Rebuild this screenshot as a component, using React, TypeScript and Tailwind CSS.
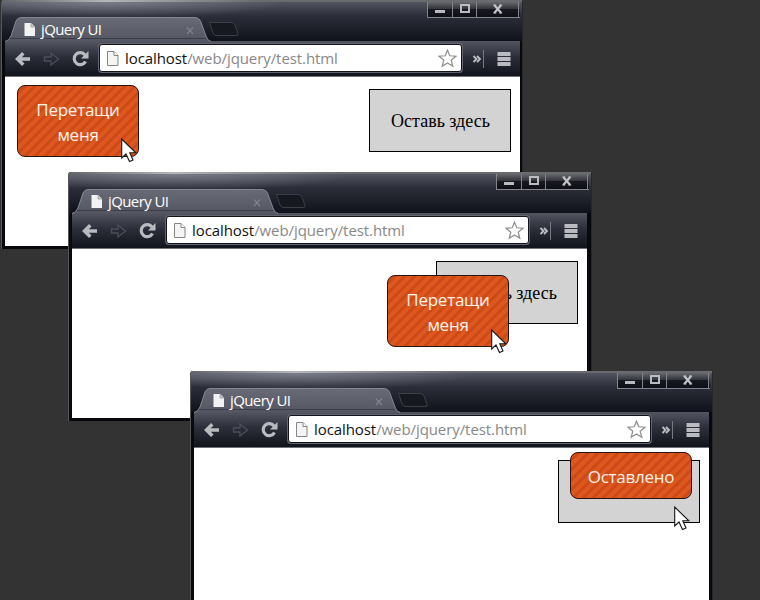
import React from "react";

const sans = "font-['Open_Sans','Noto_Sans',sans-serif]";

function Controls() {
  return (
    <div className="flex h-[18px] w-[93px] border-b border-l border-[#85868b] bg-linear-to-b from-[#77797e] via-[#34363d] via-50% to-[#090a10]">
      <svg width="93" height="18" viewBox="0 0 93 18" shapeRendering="crispEdges">
        <path d="M0 9H92V17H0Z" fill="#10121a" opacity=".75" />
        <path d="M24.500 0V17M49.500 0V17M91.500 0V17" stroke="#85868b" />
        <path d="M7 10H17V13H7Z" fill="#b9bbc0" />
        <path d="M33 5H41V12H33Z" fill="none" stroke="#b9bbc0" strokeWidth="2" />
        <path d="M67 5L74 13M74 5L67 13" stroke="#c3c4c8" strokeWidth="2.200" shapeRendering="auto" />
        <path d="M66 5H69M72 5H75M66 13H69M72 13H75" stroke="#c3c4c8" shapeRendering="auto" />
      </svg>
    </div>
  );
}

function TitleBar() {
  return (
    <div className="relative flex h-[41px] justify-end bg-linear-to-b from-[#575a65] via-[#2b2e38] via-40% to-[#10121b] pr-[2px]">
      <div className="absolute inset-x-0 top-0 h-[2px] bg-linear-to-r from-[#65666a] via-[#b5b6b9] via-20% to-[#6a6b6f] to-50%" />
      <div className="absolute left-0 top-[2px] h-[18px] w-[300px] bg-[radial-gradient(ellipse_at_35%_0%,rgba(165,168,178,0.5),transparent_65%)]" />
      <svg className="absolute left-0 top-[15px]" width="245" height="27" viewBox="0 0 245 27">
        <defs>
          <linearGradient id="tabFill" x1="0" y1="0" x2="0" y2="1">
            <stop offset="0" stopColor="#686b75" />
            <stop offset="1" stopColor="#535660" />
          </linearGradient>
        </defs>
        <path d="M3 27Q7 26 9 21L14 6Q15.500 2.500 19 2.500H193Q197 2.500 198.500 6L204 21Q205.500 26 209 27Z" fill="url(#tabFill)" />
        <path d="M3 26.500Q7 26 9 21L14 6Q15.500 2.500 19 2.500H193Q197 2.500 198.500 6L204 21Q205.500 26 209 26.500" fill="none" stroke="#858893" />
        <path d="M8 23.500H204" stroke="#3b3e48" />
        <path d="M207.500 7.500H229Q232 7.500 233 10L236 18Q237 20.500 234 20.500H215Q212 20.500 211 18Z" fill="#171921" stroke="#3d3f47" />
        <path d="M22.500 8H29L33 12V21H22.500Z" fill="#f2f2f2" />
        <path d="M29 8V12H33" fill="#c6c7ca" stroke="#888a91" strokeWidth=".6" />
        <path d="M185 12.500L191 19M191 12.500L185 19" stroke="#7f828b" strokeWidth="1.300" />
      </svg>
      <span className={`${sans} absolute left-[39px] top-[19px] whitespace-nowrap text-[15px] leading-[21px] tracking-[-0.6px] text-white`}>jQuery UI</span>
      <Controls />
    </div>
  );
}

function Toolbar() {
  return (
    <div className="flex h-[36px] shrink-0 items-start border-b border-[#70727a] bg-linear-to-b from-[#535660] via-[#2c2f39] via-45% to-[#12141c] pl-[10px] pt-[5px]">
      <svg className="-translate-x-px" width="84" height="27" viewBox="0 0 84 27">
        <g fill="none">
          <path d="M4 13H17M10.300 7.200L4.500 13L10.300 18.800" transform="translate(-1 0)" stroke="#b9bbc0" strokeWidth="3.500" />
          <path d="M30.500 11H37V7L44.500 13L37 19V15H30.500Z" stroke="#4c4f59" strokeWidth="1.300" />
          <path d="M71 9A6 6 0 1 0 71.500 15.500" stroke="#b9bbc0" strokeWidth="3.200" />
          <path d="M74.500 5V12.500H67Z" fill="#b9bbc0" />
        </g>
      </svg>
      <div className="-mt-[2px] flex h-[28px] w-[363px] shrink-0 items-center rounded-[3px] border border-[#11131a] bg-white shadow-[0_0_0_1px_#62656f]">
        <svg className="ml-[6px] shrink-0" width="13" height="17" viewBox="0 0 13 17">
          <path d="M1.500 1.500H8L12 5.500V15.500H1.500Z" fill="#f4f4f4" stroke="#858585" />
          <path d="M8 1.500V5.500H12" fill="white" stroke="#858585" />
        </svg>
        <span className={`${sans} ml-[6px] w-[313px] shrink-0 whitespace-nowrap text-[15px] leading-[22px] tracking-[-0.08px] text-[#888]`}>
          <span className="text-[#111]">localhost</span>/web/jquery/test.html
        </span>
        <svg className="shrink-0" width="19" height="19" viewBox="0 0 19 19">
          <path d="M9.500 1.200L11.800 6.800L18 7.200L13.200 11.200L14.800 17.300L9.500 14L4.200 17.300L5.800 11.200L1 7.200L7.200 6.800Z" fill="white" stroke="#8c8c8c" strokeWidth="1.200" />
        </svg>
      </div>
      <svg className="shrink-0" width="54" height="27" viewBox="0 0 54 27">
        <path d="M11.500 10L14.500 13L11.500 16M15 10L18 13L15 16" fill="none" stroke="#c0c1c5" strokeWidth="1.800" />
        <path d="M21.500 4V22" stroke="#777a83" />
        <path d="M35.500 8H48.500M35.500 13H48.500M35.500 18H48.500" stroke="#b9bbc0" strokeWidth="4" />
      </svg>
    </div>
  );
}

function Browser({ place, children }: { place: string; children: React.ReactNode }) {
  return (
    <div className={`absolute flex flex-col rounded-t-[3px] border-l border-r border-l-[#55575b] border-r-[#25272b] bg-[#08090d] ${place}`}>
      <TitleBar />
      <div className="flex min-h-0 flex-1 flex-col pb-[3px] pl-[3px]">
        <div className="flex min-h-0 w-[515px] flex-1 flex-col">
          <Toolbar />
          <div className="relative min-h-0 flex-1 bg-white">{children}</div>
        </div>
      </div>
    </div>
  );
}

function DropZone({ label }: { label?: string }) {
  return (
    <div className="absolute left-[364px] top-[12px] flex h-[63px] w-[142px] items-center justify-center border border-black bg-[#d3d3d3] pl-px font-['Liberation_Serif',serif] text-[18px] leading-none text-black">
      {label}
    </div>
  );
}

function DragCard({ place, children }: { place: string; children: React.ReactNode }) {
  return (
    <div className={`absolute flex w-[122px] items-center justify-center rounded-[8px] border border-[#29150d] bg-[#dd5117] bg-[repeating-linear-gradient(135deg,#de571f_0px,#de571f_3px,#cb4a18_4px,#cb4a18_6px,#de571f_7.07px)] pt-px text-center text-[17px] leading-[25px] tracking-[-0.25px] text-[#fff3e7] ${sans} ${place}`}>
      {children}
    </div>
  );
}

function Cursor({ place }: { place: string }) {
  return (
    <svg className={`absolute ${place}`} width="17" height="25" viewBox="0 0 17 25">
      <path d="M.7 1V20L5 16L8.500 23.500L12 22L8.800 14.800H14.800Z" fill="white" stroke="#171717" strokeWidth="1.100" />
    </svg>
  );
}

export default function App() {
  return (
    <main className="relative h-[600px] w-[760px] overflow-hidden bg-[#333]">
      <Browser place="left-px top-0 h-[249px] w-[522px]">
        <DropZone label="Оставь здесь" />
        <DragCard place="left-[12px] top-[8px] h-[72px]">Перетащи<br />меня</DragCard>
        <Cursor place="left-[116px] top-[61px]" />
      </Browser>
      <Browser place="left-[68px] top-[172px] h-[249px] w-[524px]">
        <DropZone label="Оставь здесь" />
        <DragCard place="left-[315px] top-[26px] h-[72px]">Перетащи<br />меня</DragCard>
        <Cursor place="left-[419px] top-[80px]" />
      </Browser>
      <Browser place="left-[190px] top-[371px] h-[240px] w-[523px]">
        <DropZone />
        <DragCard place="left-[376px] top-[4px] h-[47px]">Оставлено</DragCard>
        <Cursor place="left-[480px] top-[58px]" />
      </Browser>
    </main>
  );
}
